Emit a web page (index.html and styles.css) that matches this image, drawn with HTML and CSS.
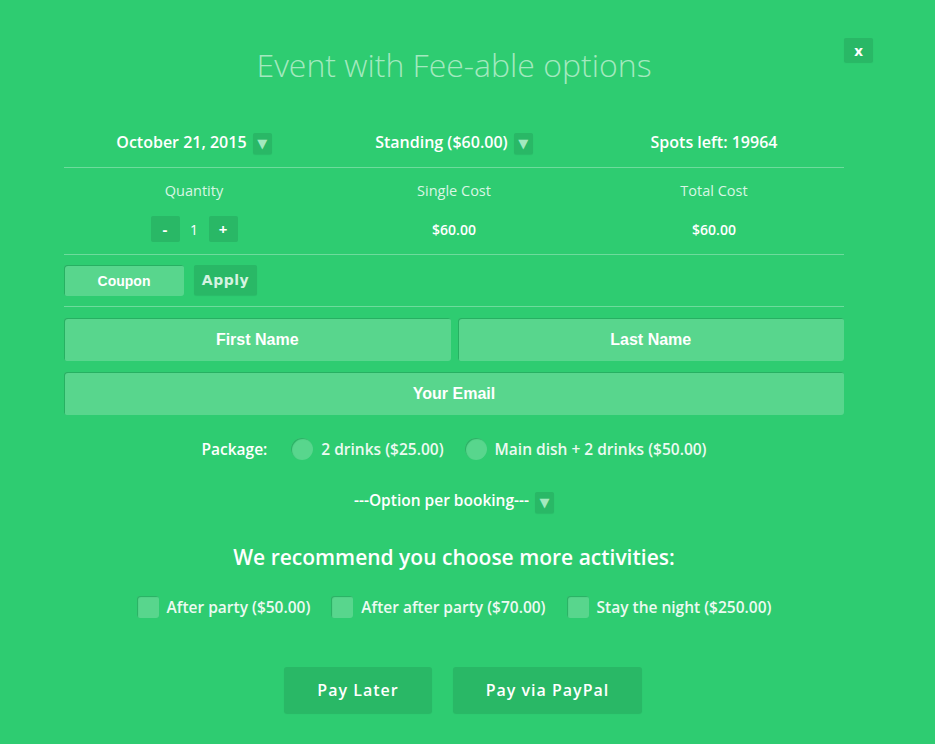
FILE: index.html
```html
<!DOCTYPE html>
<html lang="en">
<head>
    <meta charset="UTF-8">
    <meta name="viewport" content="width=device-width, initial-scale=1.0">
    <title>Event with Fee-able options</title>
    <link rel="stylesheet" href="styles.css">
</head>
<body>
    <article class="booking">
        <button type="button" class="close">x</button>
        <h1 class="title">Event with Fee-able options</h1>

        <div class="summary">
            <div class="cell">October 21, 2015 <span class="drop">&#9660;</span></div>
            <div class="cell">Standing ($60.00) <span class="drop">&#9660;</span></div>
            <div class="cell">Spots left: 19964</div>
        </div>

        <div class="costs">
            <div class="label">Quantity</div>
            <div class="label">Single Cost</div>
            <div class="label">Total Cost</div>
            <div class="value">
                <button type="button" class="step">-</button>
                <span class="qty">1</span>
                <button type="button" class="step">+</button>
            </div>
            <div class="value">$60.00</div>
            <div class="value">$60.00</div>
        </div>

        <div class="coupon">
            <input type="text" class="field coupon-field" placeholder="Coupon">
            <button type="button" class="apply">Apply</button>
        </div>

        <div class="names">
            <input type="text" class="field" placeholder="First Name">
            <input type="text" class="field" placeholder="Last Name">
        </div>
        <input type="text" class="field email" placeholder="Your Email">

        <div class="package">
            <span class="package-label">Package:</span>
            <label class="choice"><span class="radio"></span>2 drinks ($25.00)</label>
            <label class="choice"><span class="radio"></span>Main dish + 2 drinks ($50.00)</label>
        </div>

        <div class="option">---Option per booking--- <span class="drop">&#9660;</span></div>

        <h2 class="recommend">We recommend you choose more activities:</h2>

        <div class="extras">
            <label class="choice"><span class="check"></span>After party ($50.00)</label>
            <label class="choice"><span class="check"></span>After after party ($70.00)</label>
            <label class="choice"><span class="check"></span>Stay the night ($250.00)</label>
        </div>

        <div class="actions">
            <button type="button" class="pay">Pay Later</button>
            <button type="button" class="pay paypal">Pay via PayPal</button>
        </div>
    </article>
</body>
</html>
```

FILE: styles.css
```css
body {
    margin: 0;
    background: #2ecc71;
    font-family: "Open Sans", "Liberation Sans", sans-serif;
    color: #fff;
}

.booking {
    position: relative;
    width: 780px;
    padding: 45px 0 30px 64px;
}

.close {
    position: absolute;
    left: 844px;
    top: 38px;
    width: 29px;
    height: 24px;
    padding: 0;
    border: 0;
    border-radius: 2px;
    background: #29b866;
    box-shadow: 0 1px 1px rgba(0, 0, 0, 0.1);
    color: #fff;
    font-family: "Open Sans", sans-serif;
    font-weight: 700;
    font-size: 15px;
    line-height: 22px;
}

.title {
    margin: 0;
    text-align: center;
    font-weight: 300;
    font-size: 32px;
    line-height: 40px;
    color: #a3e9bf;
}

.summary {
    display: grid;
    grid-template-columns: repeat(3, 1fr);
    margin-top: 36px;
    padding: 10px 0 13px;
    border-bottom: 1px solid rgba(255, 255, 255, 0.3);
    font-weight: 600;
    font-size: 16px;
    line-height: 22px;
}

.cell {
    text-align: center;
}

.drop {
    display: inline-block;
    width: 19px;
    height: 21px;
    margin-left: 2px;
    border-radius: 2px;
    background: #29b866;
    box-shadow: 0 1px 1px rgba(0, 0, 0, 0.08);
    color: #a3e9bf;
    font-family: "DejaVu Sans", sans-serif;
    font-size: 13px;
    line-height: 21px;
    text-align: center;
    vertical-align: middle;
}

.costs {
    display: grid;
    grid-template-columns: repeat(3, 1fr);
    row-gap: 15px;
    padding: 13px 0 12px;
    border-bottom: 1px solid rgba(255, 255, 255, 0.3);
    text-align: center;
}

.label {
    font-size: 14.5px;
    line-height: 20px;
    color: #d9f6e4;
}

.value {
    display: flex;
    align-items: center;
    justify-content: center;
    height: 26px;
    font-weight: 600;
    font-size: 14px;
}

.step {
    width: 29px;
    height: 26px;
    padding: 0;
    border: 0;
    border-radius: 2px;
    background: #29b866;
    color: #fff;
    font-family: "Open Sans", sans-serif;
    font-weight: 700;
    font-size: 15px;
}

.qty {
    width: 29px;
    font-weight: 400;
    font-size: 14px;
}

.coupon {
    display: flex;
    gap: 10px;
    margin-top: 10px;
    padding-bottom: 10px;
    border-bottom: 1px solid rgba(255, 255, 255, 0.3);
}

.field {
    box-sizing: border-box;
    height: 43px;
    border: 0;
    border-radius: 3px;
    background: #58d68d;
    box-shadow: inset 1px 1px 0 #27b062;
    color: #fff;
    font-family: "Liberation Sans", Arial, sans-serif;
    font-weight: 700;
    font-size: 16px;
    text-align: center;
    outline: none;
}

.field::placeholder {
    color: #fff;
    opacity: 1;
}

.coupon-field {
    width: 120px;
    height: 31px;
    font-size: 14px;
}

.apply {
    width: 63px;
    height: 30px;
    padding: 0;
    border: 0;
    border-radius: 2px;
    background: #29b866;
    box-shadow: 0 1px 1px rgba(0, 0, 0, 0.08);
    color: #d5f3e1;
    font-family: "DejaVu Sans", sans-serif;
    font-weight: 700;
    font-size: 14px;
    letter-spacing: 0.5px;
}

.names {
    display: grid;
    grid-template-columns: 1fr 1fr;
    gap: 7px;
    margin-top: 11px;
}

.names .field {
    width: 100%;
}

.email {
    display: block;
    width: 100%;
    margin-top: 11px;
}

.package {
    display: flex;
    justify-content: center;
    align-items: center;
    margin-top: 23px;
    font-weight: 600;
    font-size: 15.5px;
    line-height: 22px;
}

.package-label {
    margin-right: 24px;
}

.choice {
    display: inline-flex;
    align-items: center;
    gap: 8px;
    color: #ecfaf1;
    font-weight: 600;
}

.package .choice + .choice {
    margin-left: 21px;
}

.radio,
.check {
    width: 22px;
    height: 22px;
    background: #58d68d;
    box-shadow: inset 1px 1px 1px #27b062;
}

.radio {
    border-radius: 50%;
}

.check {
    border-radius: 3px;
}

.option {
    margin-top: 29px;
    text-align: center;
    font-weight: 600;
    font-size: 15.5px;
    line-height: 22px;
}

.recommend {
    margin: 29px 0 0;
    text-align: center;
    font-weight: 600;
    font-size: 21px;
    line-height: 30px;
}

.extras {
    display: flex;
    justify-content: center;
    gap: 21px;
    margin-top: 24px;
    font-size: 15.5px;
    line-height: 22px;
}

.actions {
    display: flex;
    justify-content: center;
    gap: 21px;
    margin-top: 49px;
    padding-left: 18px;
}

.pay {
    width: 148px;
    height: 46px;
    border: 0;
    border-radius: 3px;
    background: #29b866;
    box-shadow: 0 1px 1px rgba(0, 0, 0, 0.1);
    color: #fff;
    font-family: "Open Sans", sans-serif;
    font-weight: 600;
    font-size: 16px;
    letter-spacing: 1px;
}

.paypal {
    width: 189px;
}
```
